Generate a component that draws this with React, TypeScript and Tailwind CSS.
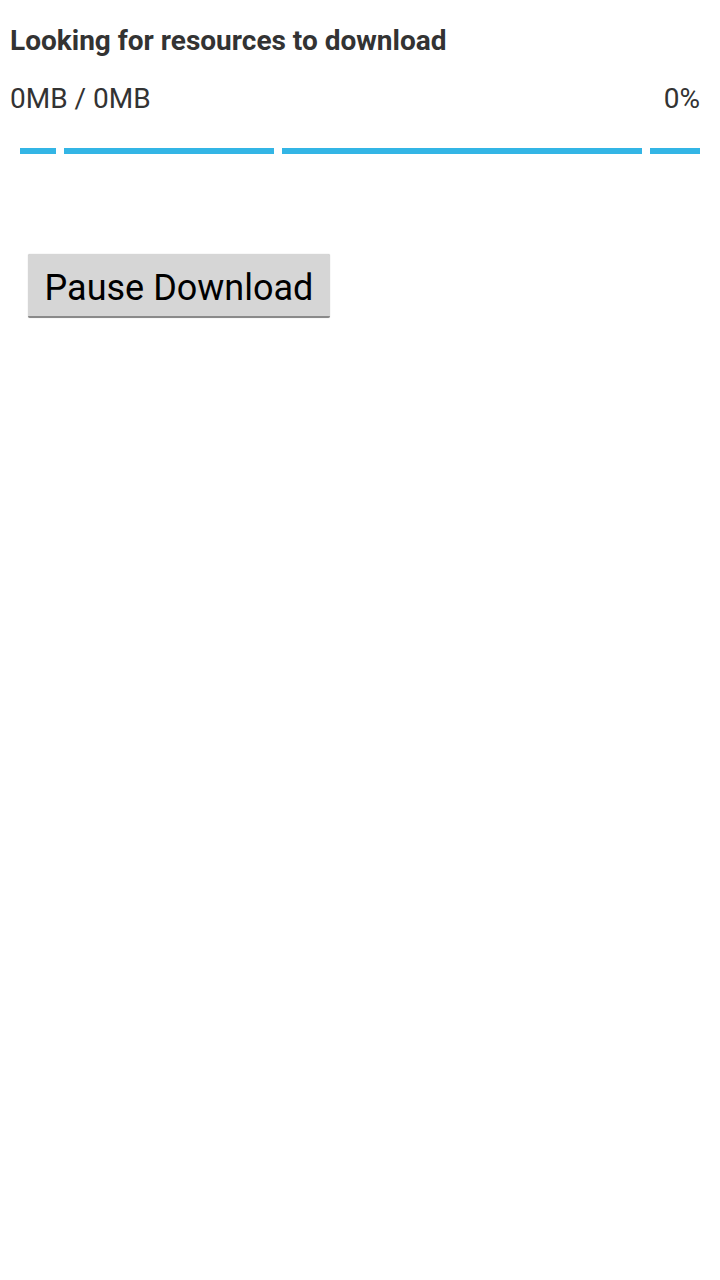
export default function App() {
  const segments = [
    { w: 36 },
    { w: 210 },
    { w: 360 },
    { w: 50 },
  ];

  return (
    <div
      className="min-h-[1280px] w-[720px] bg-white text-[#333333]"
      style={{ fontFamily: "Roboto, 'Noto Sans', sans-serif" }}
    >
      <div className="px-[10px] pt-[25px]">
        <h1 className="text-[28px] font-bold leading-[32px]">
          Looking for resources to download
        </h1>
        <div className="mt-[26px] flex items-center justify-between pr-[10px] text-[28px] leading-[32px]">
          <span>0MB / 0MB</span>
          <span>0%</span>
        </div>
      </div>

      {/* indeterminate progress bar */}
      <div className="mt-[33px] flex gap-[8px] px-[20px]">
        {segments.map((s, i) => (
          <div key={i} className="h-[6px] bg-[#33b5e5]" style={{ width: s.w }} />
        ))}
      </div>

      <div className="px-[28px] pt-[100px]">
        <button className="h-[64px] w-[302px] rounded-[2px] border-b-2 border-[#8a8a8a] bg-[#d6d6d6] pt-[5px] text-[36px] leading-none text-black shadow-[0_0_1px_rgba(0,0,0,0.3)]">
          Pause Download
        </button>
      </div>
    </div>
  );
}
